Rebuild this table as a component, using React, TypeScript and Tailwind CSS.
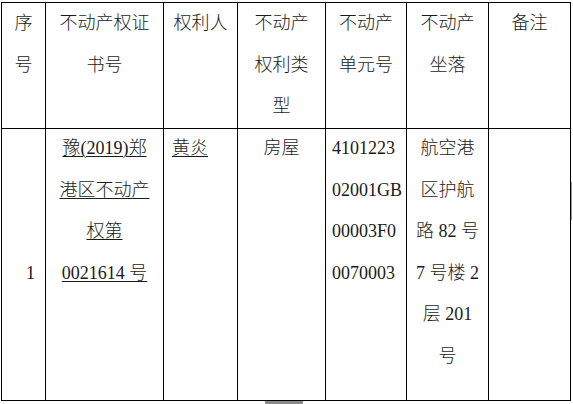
import React from "react";

const font = { fontFamily: '"Liberation Serif", "Noto Sans CJK SC", serif' };

function Lines({ lines, className = "" }: { lines: string[]; className?: string }) {
  return (
    <>
      {lines.map((l, i) => (
        <div key={i} className={className}>
          {l}
        </div>
      ))}
    </>
  );
}

export default function App() {
  return (
    <div className="w-[573px] h-[404px] bg-white relative overflow-hidden text-[18px] font-light text-[#1a1a1a]" style={font}>
      <div className="pt-[2px] pl-[1px]">
        <div className="w-[570px] border-l border-t border-black">
          {/* header */}
          <div className="grid grid-cols-[44px_118px_74px_88px_81px_82px_82px] h-[125px] leading-[41.5px]">
            <div className="border-r border-b border-black text-center">
              <Lines lines={["序", "号"]} />
            </div>
            <div className="border-r border-b border-black text-center">
              <Lines lines={["不动产权证", "书号"]} />
            </div>
            <div className="border-r border-b border-black text-center">
              <Lines lines={["权利人"]} />
            </div>
            <div className="border-r border-b border-black text-center">
              <Lines lines={["不动产", "权利类", "型"]} />
            </div>
            <div className="border-r border-b border-black text-center">
              <Lines lines={["不动产", "单元号"]} />
            </div>
            <div className="border-r border-b border-black text-center">
              <Lines lines={["不动产", "坐落"]} />
            </div>
            <div className="border-r border-b border-black text-center">
              <Lines lines={["备注"]} />
            </div>
          </div>
          {/* body */}
          <div className="grid grid-cols-[44px_118px_74px_88px_81px_82px_82px] h-[273px] leading-[41.5px]">
            <div className="border-r border-b border-black text-center pl-[14px] pt-[124.5px]">1</div>
            <div className="border-r border-b border-black text-center">
              {["豫(2019)郑", "港区不动产", "权第", "0021614 号"].map((l, i) => (
                <div key={i}>
                  <span className="underline decoration-1 underline-offset-[2px]">{l}</span>
                </div>
              ))}
            </div>
            <div className="border-r border-b border-black pl-[8px]">
              <span className="underline decoration-1 underline-offset-[2px]">黄炎</span>
            </div>
            <div className="border-r border-b border-black text-center">房屋</div>
            <div className="border-r border-b border-black pl-[6px]">
              <Lines lines={["4101223", "02001GB", "00003F0", "0070003"]} />
            </div>
            <div className="border-r border-b border-black text-center">
              <Lines lines={["航空港", "区护航", "路 82 号", "7 号楼 2", "层 201", "号"]} />
            </div>
            <div className="border-r border-b border-black"></div>
          </div>
        </div>
        <div className="ml-[264px] w-[38px] h-[3px] bg-[#8a8a8a]"></div>
      </div>
      <div className="absolute left-[571px] top-[182px] w-[1px] h-[38px] bg-[#9a9a9a]"></div>
    </div>
  );
}
